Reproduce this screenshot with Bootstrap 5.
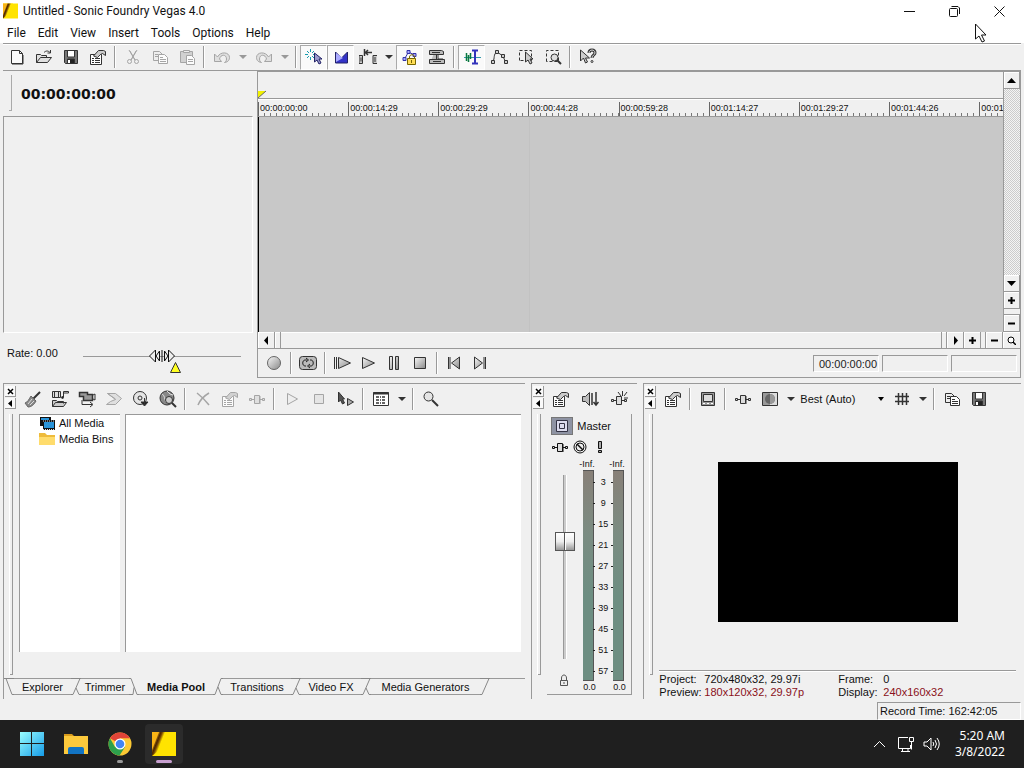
<!DOCTYPE html>
<html lang="en">
<head>
<meta charset="utf-8">
<meta name="viewport" content="width=device-width, initial-scale=1">
<title>Untitled - Sonic Foundry Vegas 4.0</title>
<link rel="stylesheet" href="https://cdn.jsdelivr.net/npm/bootstrap@5.3.0/dist/css/bootstrap.min.css">
<style>
:root{--face:#f0f0f0;--edge:#999;--ink:#333}
body{font-family:"Liberation Sans",Arial,sans-serif;font-size:11px;line-height:13px;color:#111;background:var(--face)}
svg{display:block;flex:none}
button,select,input{font:inherit;color:inherit}
.ico{width:18px;height:18px;fill:none;stroke:currentColor;stroke-width:1}
.sys{font-family:"Noto Sans","Open Sans",sans-serif;font-size:12px;line-height:16px}
.titlebar,.menus{font-family:Roboto,"Noto Sans",sans-serif}
.titlebar{height:22px;background:#fff;padding-right:2px}
.titlebar svg:first-child{margin:0 5px 0 3px}
.winbtn{width:45px;height:22px;border:0;background:none;padding:0}
.menus{height:21px;background:#fff;padding-left:1px}
.menus button{border:0;background:none;padding:0 6px}
.bar{border-top:1px solid var(--edge);border-bottom:1px solid var(--edge);height:28px;box-shadow:inset 0 1px #fff;margin:0 3px}
.tool,.drop{border:1px solid transparent;background:none;padding:0;width:27px;height:25px;display:flex;align-items:center;justify-content:center;color:var(--ink);flex:none}
.tool.on{background:#fafafa;border-color:#aaa #fff #fff #aaa}
.tool:disabled,.drop:disabled{color:#999}
.tool:disabled .ico{opacity:.85}
.drop{width:15px}
.drop::after{content:"";border:4px solid transparent;border-top-color:currentColor;border-bottom:0}
.split{width:8px;height:22px;flex:none;display:flex;justify-content:center}
.split::before{content:"";border-left:1px solid #999;border-right:1px solid #fff}
.side{width:254px;margin-left:3px}
.clockbar{height:45px;padding-top:4px}
.grip-v{width:3px;height:36px;margin-left:6px;border:solid #aaa;border-width:0 1px 1px 0}
.clock{font:bold 14px/38px "DejaVu Sans",sans-serif;margin-left:9px}
.sunk{border:1px solid;border-color:#999 #fff #fff #999}
.rate{height:45px;padding:14px 0 0 4px}
.rate-slide{width:158px;height:28px;margin-left:25px}
.slim{appearance:none;-webkit-appearance:none;background:linear-gradient(#999,#999) center/100% 1px no-repeat;width:100%;height:18px;margin:0;display:block}
.slim::-webkit-slider-thumb{-webkit-appearance:none;width:26px;height:16px;background:url("data:image/svg+xml,%3Csvg xmlns='http://www.w3.org/2000/svg' width='26' height='16' fill='%23eee' stroke='%23111'%3E%3Cpath d='M6.500 2v12L.5 8zM10.500 3v10L7 8zM19.500 2v12l6-6zM15.500 3v10l3.500-5zM13 2v12'/%3E%3C/svg%3E") no-repeat}
.rate-mark{left:86px;top:14px}
.timeline{border:1px solid #999;margin-right:3px}
.markers{height:27px;padding-top:18px;border-bottom:1px solid #999}
.ruler{height:18px;font-size:9px;line-height:18px;border-bottom:1px solid #999;box-shadow:inset 0 1px #fff}
.mark-cell{flex:0 0 12.1%;overflow:hidden;height:17px;padding-left:2px;white-space:nowrap;background:linear-gradient(#666,#666) 0 100%/1px 14px no-repeat,repeating-linear-gradient(90deg,#777 0 1px,transparent 1px 6px) 0 100%/100% 3px no-repeat}
.mark-cell:last-child{flex:1 1 0;min-width:0}
.tracks{background:linear-gradient(#c2c2c2,#c2c2c2) 36.4% 0/1px 100% no-repeat #c8c8c8;border-left:1px solid #000;flex:1}
.vscroll{width:17px;border-left:1px solid #999}
.sb{width:17px;height:17px;border:solid #999;border-width:0 1px 1px 0;box-shadow:inset 1px 1px #fff;background:var(--face);padding:0;display:flex;align-items:center;justify-content:center;flex:none;color:#000}
.vscroll .sb{width:16px}
.sb svg{width:9px;height:9px;fill:#000}
.gap-b{height:6px;border-bottom:1px solid #999}
.gap-r{width:5px;border-right:1px solid #999}
.dither{background:conic-gradient(#ccc 25%,#f4f4f4 0 50%,#ccc 0 75%,#f4f4f4 0) 0 0/2px 2px;flex:1}
.hscroll{height:17px;border-bottom:1px solid #999}
.hscroll .sb{height:16px;border-bottom:0}
.hthumb{border-right:1px solid #999;box-shadow:inset 1px 1px #fff;padding-left:5px}
.hthumb::before,.hthumb::after{content:"";border-left:1px solid #999;height:16px}
.hthumb::after{margin-left:auto;margin-right:4px}
.transport{height:28px;padding-left:3px}
.transport .tool{width:26px}
.readout{width:66px;height:17px;line-height:16px;margin-right:3px;padding-left:5px;white-space:nowrap;color:#222}
.docks{display:grid;grid-template-columns:minmax(0,1fr) 106px 37.1%;padding:5px 3px 0;gap:6px}
.dock{border:solid #999;border-width:1px 0 0 1px;min-width:0;height:316px}
.handle{width:15px;padding:2px 0 24px 1px;flex:none}
.handle button{width:11px;height:11px;border:solid #999;border-width:0 1px 1px 0;background:#fafafa;padding:0;margin-bottom:1px;display:flex;align-items:center;justify-content:center}
.handle svg{width:7px;height:7px}
.handle i{flex:1;width:3px;border:solid #999;border-width:0 1px 1px 0;box-shadow:-1px 0 #fff;margin:4px 0 0 5px}
.dock-tools{height:30px}
.tree{width:101px;background:#fff;border:solid #999;border-width:1px 0 0 1px;margin-right:5px}
.tree a{color:#111;line-height:16px;text-decoration:none;padding-left:19px;gap:4px;white-space:nowrap}
.pool{background:#fff;border:solid #999;border-width:1px 0 0 1px;margin-right:4px}
.panes{height:238px}
.tabstrip{height:17px;margin-top:26px;margin-left:-15px}
.tabstrip button{border:solid #999;border-width:1px 0;background:none;padding:0;height:17px;line-height:16px;text-align:center;white-space:nowrap}
.tabstrip svg{width:10px;height:17px;stroke:#888;fill:none}
.tabstrip button.active{border-top-color:transparent;font-weight:bold}
.t48{width:48px}.t57{width:57px}.t60{width:60px}.t68{width:68px}.t74{width:74px}.t109{width:109px}
.tab-rest{border-top:1px solid #999}
.mix-tools,.mix-row{gap:2px}
.strip{border:solid #999;border-width:0 1px 1px 0;width:85px;height:281px;padding:3px 0 0 4px}
.mix-row{padding-top:3px}
.master-btn{width:22px;height:18px;border:1px solid #777;background:#8e93a3;padding:0}
.tiny{font-size:9px;line-height:11px}
.fader-col{width:28px;padding:17px 0 0 4px}
.fader{appearance:none;-webkit-appearance:none;writing-mode:vertical-lr;direction:rtl;width:20px;height:188px;margin:0;background:linear-gradient(90deg,#999 1px,#ccc 1px 3px,#fff 3px) center/4px 184px no-repeat}
.fader::-webkit-slider-thumb{-webkit-appearance:none;width:20px;height:19px;border:1px solid #555;background:linear-gradient(90deg,transparent 8px,#555 8px 9px,#fff 9px 10px,transparent 10px),linear-gradient(#fff,#eee 50%,#999)}
.meter-col{width:18px;padding-top:3px}
.meter{width:11px;height:211px;border:solid #555;border-width:1px 1px 1px 0;background:linear-gradient(#888078,#7b8c82 30%,#6d8e82 60%,#6d8e82);margin-bottom:1px}
.scale{width:12px;padding-top:16px;line-height:21px;text-align:center;font-size:9px}
.scale div{height:21px;position:relative}
.scale div::before,.scale div::after{content:"";position:absolute;top:10px;left:-4px;width:2px;height:11px;border:solid #222;border-width:1px 0 0}
.scale div::after{left:auto;right:-4px}
.viewer{width:240px;height:160px;background:#000}
.info{border-top:1px solid #999;box-shadow:inset 0 1px #fff;margin:0 5px 0 0;padding-top:2px;grid-template-columns:45px 134px 45px 1fr;display:grid;height:29px}
.info dt{font-weight:normal}.info dd{margin:0;white-space:nowrap}
.red{color:#8a1020}
.quality{appearance:none;-webkit-appearance:none;border:0;border-radius:0;width:90px;height:20px;padding:0 12px 0 2px;background:url("data:image/svg+xml,%3Csvg xmlns='http://www.w3.org/2000/svg' width='6' height='4'%3E%3Cpath d='M0 0h6L3 4z'/%3E%3C/svg%3E") no-repeat right 4px center;margin:0}
.statusline{padding-top:3px}
.record{width:144px;height:18px;line-height:16px;padding-left:2px;margin-right:3px;white-space:nowrap}
.taskbar{height:48px;background:#1f1f1f;color:#fff;padding-left:13px}
.task{width:38px;height:40px;border:0;border-radius:4px;background:none;padding:0;margin-right:6px;position:relative;display:flex;align-items:center;justify-content:center}
.task.on{background:#2b2b2b}
.task.run::after{content:"";position:absolute;bottom:1px;width:6px;height:3px;border-radius:2px;background:#999}
.task.on::after{width:16px;background:#c8a0d0}
.tray-clock{margin:0 19px 0 15px}
.pointer{left:974px;top:23px;z-index:5;pointer-events:none}
</style>
</head>
<body>
<svg width="0" height="0" class="position-absolute" aria-hidden="true">
<defs>
<linearGradient id="gm" x2="1" y2="1"><stop stop-color="#f8f8f8"/><stop offset="1" stop-color="#888"/></linearGradient>
<linearGradient id="streak" x1=".2" y1=".2" x2=".7" y2=".5"><stop stop-color="#f9b416"/><stop offset=".35" stop-color="#4a2500"/><stop offset=".5" stop-color="#7a4a00"/><stop offset=".75" stop-color="#ffe300"/></linearGradient>
<linearGradient id="bl" x2="1" y2="1"><stop stop-color="#9ff"/><stop offset="1" stop-color="#159be8"/></linearGradient>
<symbol id="new" viewBox="0 0 18 18"><path d="M3.500 2.500h8l3 3v10h-11z" fill="#fafafa"/><path d="M11.500 2.500v3h3M15 7v9H4"/></symbol>
<symbol id="open" viewBox="0 0 18 18"><path d="M1.500 14.500v-8h4l1 1h5v2M1.500 14.500l4-5h11l-4 5z" fill="#e0e0e0"/><path d="M9 4.500c2-2 4-2 6 0M15.500 2v3h-3"/></symbol>
<symbol id="save" viewBox="0 0 18 18"><path d="M2.500 2.500h13v13h-12l-1-1z" fill="#777"/><path d="M5.500 3v6h7V3" fill="#fff"/><path d="M5.500 15v-4h7v4" fill="#222"/><path d="M7 12v3" stroke="#fff" stroke-width="2"/></symbol>
<symbol id="prop" viewBox="0 0 18 18"><path d="M1.500 6.500h11v10h-11z" fill="#fff"/><path d="M3 10.500h2m1 0h5M3 12.500h2m1 0h5M3 14.500h2m1 0h5"/><path d="M4.500 8l5-5.500h5l2 1v4l-3-2-2 1-3 3z" fill="#ccc"/></symbol>
<symbol id="cut" viewBox="0 0 18 18"><path d="M5 2l6 10M13 2L7 12M6 3l5 9M12 3l-5 9"/><circle cx="5.500" cy="13.500" r="2"/><circle cx="12.500" cy="13.500" r="2"/></symbol>
<symbol id="copy" viewBox="0 0 18 18"><path d="M2.500 3.500h6l3 3v6h-9z" fill="#eee"/><path d="M7.500 6.500h6l3 3v6h-9z" fill="#fff"/><path d="M4 6.500h3M4 8.500h3M9 9.500h3m-3 2h6m-6 2h6"/></symbol>
<symbol id="paste" viewBox="0 0 18 18"><path d="M2.500 3.500h12v11h-12z" fill="#ccc"/><path d="M5.500 4.500v-2h6v2z" fill="#eee"/><path d="M8.500 7.500h5l3 3v6h-8z" fill="#fff"/><path d="M10 11.500h5m-5 2h5"/></symbol>
<symbol id="undo" viewBox="0 0 18 18"><path d="M1.500 6v7.500h7l-2-2.500c1-5 7-5 7 0 0 2-1 3-2 3.500 4-.5 5-3 5-5 0-5.500-9-6.500-12-.5z" fill="#ddd"/></symbol>
<symbol id="redo" viewBox="0 0 18 18"><path d="M16.500 6v7.500h-7l2-2.500c-1-5-7-5-7 0 0 2 1 3 2 3.500-4-.5-5-3-5-5 0-5.500 9-6.500 12-.5z" fill="#ddd"/></symbol>
<symbol id="snap" viewBox="0 0 18 18"><path d="M5.500 1v3m0 5v3M0 6.500h3m5 0h3M2 3l2 2m3 3l2 2M2 10l2-2m3-3l2-2" stroke="#189cae"/><path d="M9.500 5v9l2.500-2 2 4 2-1-2-4h3z" fill="#99c" stroke="#226"/></symbol>
<symbol id="fade" viewBox="0 0 18 18"><path d="M3.500 4v11h12V4l-6 6z" fill="#3434c8" stroke="#226"/><path d="M4 5v9l7-4z" fill="#aaf" stroke="none"/></symbol>
<symbol id="ripple" viewBox="0 0 18 18"><path d="M0 7.500h3.500v8H0zm2 2v4M18 7.500h-4v8h4M16 9v5" fill="#ccc"/><path d="M5.500 1v7M5 4.500h8M9 2L6.500 4.500 9 7" stroke-width="1.500"/></symbol>
<symbol id="lockenv" viewBox="0 0 18 18"><path d="M3.500 11l4-7 6 3" stroke="#33a"/><path d="M2 9.500h3v3H2zM6 2.500h3v3H6zM12 5.500h3v3h-3z" fill="#aaf" stroke="#33a"/><path d="M8.500 10V9c0-3 5-3 5 0v2" stroke="#760"/><path d="M6.500 10.500h8v6h-8z" fill="#fd5" stroke="#760"/><path d="M10.500 12v3" stroke="#760"/></symbol>
<symbol id="group" viewBox="0 0 18 18"><path d="M1.500 2.500h12l2 1v3h-14zM1.500 11.500h15v4h-15zM5.500 6.500h3v5h-5" fill="#bbb"/><path d="M10 7v4h5M4 4.500h8M5 13.500h8"/></symbol>
<symbol id="edit" viewBox="0 0 18 18"><path d="M1 9.500h17" stroke="#39a"/><path d="M3.500 5v8m2-6v7m2-9v6" stroke="#087840" stroke-width="1.500"/><path d="M9 2.500h6M9 15.500h6M12 3v12" stroke="#33b" stroke-width="2"/></symbol>
<symbol id="env" viewBox="0 0 18 18"><path d="M3 13C5 11 3 6 7 4l6 4 2 5"/><path d="M1.500 12.500h3v3h-3zM5.500 2.500h3v3h-3zM11.500 6.500h3v3h-3zM14.500 12.500h3v3h-3z" fill="#ccc"/></symbol>
<symbol id="sel" viewBox="0 0 18 18"><path d="M2.500 12.500v-10h12v10z" stroke-dasharray="3 2"/><path d="M8.500 4v10l2.500-2 2 4 2-1-2-4h3z" fill="#ccc"/></symbol>
<symbol id="zoomt" viewBox="0 0 18 18"><path d="M2.500 13.500v-11h12v11z" stroke-dasharray="3 2"/><circle cx="10.500" cy="9.500" r="3.500" fill="#ddd"/><path d="M13 12l4 4" stroke-width="2"/></symbol>
<symbol id="help" viewBox="0 0 18 18"><path d="M1.500 2v11l3-3 2 5 2-1-2-4h4z" fill="#ccc"/><path d="M10 5c0-4 6-4 6 0 0 2-3 2-3 5" stroke-width="3"/><path d="M10 5c0-4 6-4 6 0 0 2-3 2-3 5" stroke="#ddd"/><circle cx="13" cy="13.500" r="1"/></symbol>
<symbol id="play" viewBox="0 0 18 18"><path d="M3.500 3.500v11l12-5.500z" fill="url(#gm)"/></symbol>
<symbol id="playd" viewBox="0 0 18 18"><path d="M4.500 3.500v11l10-5.500z" fill="#eee"/></symbol>
<symbol id="stopd" viewBox="0 0 18 18"><path d="M4.500 4.500h9v9h-9z" fill="#e4e4e4"/></symbol>
<symbol id="playall" viewBox="0 0 18 18"><path d="M1.500 3v12M3.500 3v12M5.500 3.500v11l12-5.500z" fill="url(#gm)"/></symbol>
<symbol id="stop" viewBox="0 0 18 18"><path d="M3.500 3.500h11v11h-11z" fill="url(#gm)"/></symbol>
<symbol id="pause" viewBox="0 0 18 18"><path d="M4.500 2.500h3v13h-3zM10.500 2.500h3v13h-3z" fill="url(#gm)"/></symbol>
<symbol id="rec" viewBox="0 0 18 18"><circle cx="9" cy="9" r="6.500" fill="url(#gm)" stroke="#666"/></symbol>
<symbol id="loop" viewBox="0 0 18 18"><rect x=".5" y="2.500" width="17" height="13" rx="3" fill="#bbb"/><path d="M8 6H6c-3 0-3 6 0 6h1M10 12h2c3 0 3-6 0-6h-1M7 4l2.500 2L7 8M11 10l-2.500 2 2.500 2" stroke="#222"/></symbol>
<symbol id="first" viewBox="0 0 18 18"><path d="M3.500 3v12M5 3v12M14.500 3v12l-8-6z" fill="url(#gm)"/></symbol>
<symbol id="last" viewBox="0 0 18 18"><path d="M14.500 3v12M13 3v12M3.500 3v12l8-6z" fill="url(#gm)"/></symbol>
<symbol id="brush" viewBox="0 0 18 18"><path d="M16 2L9 9" stroke-width="2"/><path d="M7 6l5 5c-2 4-5 6-8 6l-3-4c3-1 4-4 6-7z" fill="#888" stroke="#666"/><path d="M4 14l4-5M6 15l4-4" stroke="#ddd"/></symbol>
<symbol id="import" viewBox="0 0 18 18"><path d="M1.500 1.500h8v6h-8z" fill="#ddd"/><path d="M3.500 2v5M7.500 2v5M12.500 7V1.500h5V3h-5"/><circle cx="11.500" cy="7.500" r="1" fill="#222"/><path d="M1.500 16.500v-6h4l1 1h6v2M1.500 16.500l3-4h11l-3 4z" fill="#ccc"/></symbol>
<symbol id="cam" viewBox="0 0 18 18"><path d="M1.500 2.500h8v2h5v6h-9v-4h-4z" fill="#999" stroke-width="1.500"/><path d="M15 5l2-1v6l-2-1M4 10v4.500h10M12 12l3 2.500-3 2.500"/></symbol>
<symbol id="scan" viewBox="0 0 18 18"><path d="M2.500 3.500h8l6 5-6 6h-9l4-3 5-2zM2.500 3.500l8 5.500" fill="#ddd"/></symbol>
<symbol id="cd" viewBox="0 0 18 18"><circle cx="8" cy="8" r="6.500" fill="#e4e4e4"/><circle cx="8" cy="8" r="2"/><path d="M12.500 8v7M9 12l3.500 4 3.500-4z" fill="#222"/></symbol>
<symbol id="web" viewBox="0 0 18 18"><circle cx="8" cy="8" r="7" fill="#888"/><path d="M3 4c3 1 2 5 4 8M8 1l3 3 3 1" stroke="#ddd"/><circle cx="10" cy="10" r="3.500" fill="#ccc"/><path d="M13 13l4 4" stroke-width="2"/></symbol>
<symbol id="del" viewBox="0 0 18 18"><path d="M3 3c4 3 8 7 12 12M15 3C10 6 6 10 4 15" stroke-width="1.500"/></symbol>
<symbol id="fx" viewBox="0 0 18 18"><path d="M3 9.500h12"/><path d="M1.500 8.500h2v2h-2zM14.500 8.500h2v2h-2zM6.500 5.500h5v8h-5z" fill="#ddd"/><path d="M12 6v8"/></symbol>
<symbol id="fxa" viewBox="0 0 18 18"><path d="M3 10.500h12M12.500 1v5M8 2l3 4M17 2l-3 4M14 8h4"/><path d="M1.500 9.500h2v2h-2zM14.500 9.500h2v2h-2zM6.500 6.500h5v8h-5z" fill="#ddd"/></symbol>
<symbol id="auto" viewBox="0 0 18 18"><path d="M1.500 2v10l2-2 2 4 2-1-2-4h2z" fill="#555"/><path d="M10.500 8.500v7l6-3.500z" fill="#aaa"/></symbol>
<symbol id="view" viewBox="0 0 18 18"><path d="M1.500 2.500h15v13h-15z" fill="#fff"/><path d="M1 3.500h16" stroke-width="2"/><path d="M4 7h10M4 10h10M4 13h10" stroke-width="1.500" stroke-dasharray="3 1 1 1"/></symbol>
<symbol id="mag" viewBox="0 0 18 18"><circle cx="6.500" cy="6.500" r="4.500" fill="#e4e4e4"/><path d="M10 10l6 6" stroke-width="2"/></symbol>
<symbol id="spk" viewBox="0 0 18 18"><path d="M1.500 6.500h3l4-4v13l-4-4h-3z" fill="#bbb"/><path d="M11 3v12M15 2v12M12.500 12l2.500 3 2.500-3" stroke-width="1.500"/></symbol>
<symbol id="mute" viewBox="0 0 18 18"><circle cx="9" cy="9" r="6" fill="#eee"/><circle cx="9" cy="9" r="4"/><path d="M6 6l6 6" stroke-width="1.500"/></symbol>
<symbol id="bang" viewBox="0 0 18 18"><path d="M7.500 3.500h3v7h-3zM7.500 12.500h3v2h-3z" fill="#aaa"/></symbol>
<symbol id="lock" viewBox="0 0 18 18"><path d="M6.500 8V6c0-4 5-4 5 0v2M5.500 8.500h7v5h-7z" fill="#eee" stroke="#555"/><path d="M9 10v2" stroke="#555"/></symbol>
<symbol id="mon" viewBox="0 0 18 18"><path d="M2.500 2.500h13v13h-13z" fill="#999"/><path d="M4.500 4.500h9v7h-9z" fill="#ddd"/><path d="M4 13.500h10" stroke="#fff" stroke-dasharray="2 2"/></symbol>
<symbol id="half" viewBox="0 0 18 18"><path d="M1.500 2.500h15v13h-15z" fill="#ddd"/><path d="M2 3h7v12H2z" fill="#999" stroke="none"/><circle cx="9" cy="9" r="5" fill="#666" stroke="none"/><path d="M9 4a5 5 0 010 10z" fill="#999" stroke="none"/></symbol>
<symbol id="gridi" viewBox="0 0 18 18"><path d="M5.500 3v12M9.500 3v12M13.500 3v12M2 6.500h14M2 11.500h14" stroke-width="1.500"/></symbol>
<symbol id="plus" viewBox="0 0 9 9"><path d="M1 4.500h7M4.500 1v7" stroke="#000" stroke-width="2"/></symbol>
<symbol id="minus" viewBox="0 0 9 9"><path d="M1 4.500h7" stroke="#000" stroke-width="2"/></symbol>
<symbol id="x" viewBox="0 0 7 7"><path d="M1 1l5 5M6 1L1 6" stroke="#000" stroke-width="1.500"/></symbol>
<symbol id="lt" viewBox="0 0 7 7"><path d="M5 0v7L1 3.500z" fill="#000"/></symbol>
<symbol id="vegas" viewBox="0 0 24 24"><path d="M0 0h24v24H0z" fill="#ffe300"/><path d="M0 0h8L0 20z" fill="#f9b416"/><path d="M7 0h9L5 20l-5 4v-6z" fill="url(#streak)"/></symbol>
</defs>
</svg>

<div class="d-flex flex-column min-vh-100 position-relative">
<header>
  <div class="titlebar d-flex align-items-center sys">
    <svg width="15" height="16"><use href="#vegas"/></svg>
    <span>Untitled - Sonic Foundry Vegas 4.0</span>
    <div class="ms-auto d-flex">
      <button class="winbtn" aria-label="Minimize"><svg class="mx-auto" width="11" height="11"><path d="M0 5.500h11" stroke="#111"/></svg></button>
      <button class="winbtn" aria-label="Restore"><svg class="mx-auto" width="11" height="11" fill="none" stroke="#111"><rect x=".5" y="2.500" width="8" height="8" rx="1"/><path d="M2.500.5H9l1.500 1.500v6"/></svg></button>
      <button class="winbtn" aria-label="Close"><svg class="mx-auto" width="11" height="11" stroke="#111"><path d="M.5.500l10 10M10.500.5l-10 10"/></svg></button>
    </div>
  </div>
  <nav class="menus d-flex align-items-center sys" aria-label="Menu">
    <button>File</button><button>Edit</button><button>View</button><button>Insert</button><button>Tools</button><button>Options</button><button>Help</button>
  </nav>
  <div class="bar d-flex align-items-center" role="toolbar" aria-label="Main">
    <button class="tool" aria-label="New"><svg class="ico"><use href="#new"/></svg></button>
    <button class="tool" aria-label="Open"><svg class="ico"><use href="#open"/></svg></button>
    <button class="tool" aria-label="Save"><svg class="ico"><use href="#save"/></svg></button>
    <button class="tool" aria-label="Properties"><svg class="ico"><use href="#prop"/></svg></button>
    <span class="split"></span>
    <button class="tool" disabled aria-label="Cut"><svg class="ico"><use href="#cut"/></svg></button>
    <button class="tool" disabled aria-label="Copy"><svg class="ico"><use href="#copy"/></svg></button>
    <button class="tool" disabled aria-label="Paste"><svg class="ico"><use href="#paste"/></svg></button>
    <span class="split"></span>
    <button class="tool" disabled aria-label="Undo"><svg class="ico"><use href="#undo"/></svg></button>
    <button class="drop" disabled aria-label="Undo list"></button>
    <button class="tool" disabled aria-label="Redo"><svg class="ico"><use href="#redo"/></svg></button>
    <button class="drop" disabled aria-label="Redo list"></button>
    <span class="split"></span>
    <button class="tool on" aria-label="Snapping"><svg class="ico"><use href="#snap"/></svg></button>
    <button class="tool on" aria-label="Automatic crossfades"><svg class="ico"><use href="#fade"/></svg></button>
    <button class="tool" aria-label="Ripple"><svg class="ico"><use href="#ripple"/></svg></button>
    <button class="drop" aria-label="Ripple options"></button>
    <button class="tool on" aria-label="Lock envelopes"><svg class="ico"><use href="#lockenv"/></svg></button>
    <button class="tool" aria-label="Ignore grouping"><svg class="ico"><use href="#group"/></svg></button>
    <span class="split"></span>
    <button class="tool on" aria-label="Normal edit"><svg class="ico"><use href="#edit"/></svg></button>
    <button class="tool" aria-label="Envelope edit"><svg class="ico"><use href="#env"/></svg></button>
    <button class="tool" aria-label="Selection edit"><svg class="ico"><use href="#sel"/></svg></button>
    <button class="tool" aria-label="Zoom edit"><svg class="ico"><use href="#zoomt"/></svg></button>
    <span class="split"></span>
    <button class="tool" aria-label="What's this"><svg class="ico"><use href="#help"/></svg></button>
  </div>
</header>

<main class="d-flex flex-column flex-grow-1">
  <section class="d-flex flex-grow-1">
    <div class="side d-flex flex-column">
      <div class="clockbar d-flex"><span class="grip-v"></span><span class="clock">00:00:00:00</span></div>
      <div class="sunk flex-grow-1 me-1"></div>
      <div class="rate d-flex">
        <label for="rate">Rate: 0.00</label>
        <div class="rate-slide position-relative">
          <input id="rate" type="range" class="slim" min="-20" max="20" value="0">
          <svg class="position-absolute rate-mark" width="13" height="13"><path d="M6.500 1.500l5 10h-10z" fill="#ff2" stroke="#333"/></svg>
        </div>
      </div>
    </div>
    <div class="timeline d-flex flex-column flex-grow-1">
      <div class="d-flex flex-grow-1">
        <div class="d-flex flex-column flex-grow-1 overflow-hidden">
          <div class="markers"><svg width="9" height="8"><path d="M0 1h8L0 8z" fill="#f2f200"/><path d="M8 1L0 8" stroke="#666"/></svg></div>
          <div class="ruler d-flex overflow-hidden">
            <span class="mark-cell">00:00:00:00</span><span class="mark-cell">00:00:14:29</span><span class="mark-cell">00:00:29:29</span><span class="mark-cell">00:00:44:28</span><span class="mark-cell">00:00:59:28</span><span class="mark-cell">00:01:14:27</span><span class="mark-cell">00:01:29:27</span><span class="mark-cell">00:01:44:26</span><span class="mark-cell">00:01</span>
          </div>
          <div class="tracks"></div>
        </div>
        <div class="vscroll d-flex flex-column">
          <button class="sb" aria-label="Scroll up"><svg viewBox="0 0 9 9"><path d="M0 7h9L4.500 2z"/></svg></button>
          <div class="dither"></div>
          <button class="sb" aria-label="Scroll down"><svg viewBox="0 0 9 9"><path d="M0 2h9L4.500 7z"/></svg></button>
          <button class="sb" aria-label="Taller tracks"><svg><use href="#plus"/></svg></button>
          <div class="gap-b"></div>
          <button class="sb" aria-label="Shorter tracks"><svg><use href="#minus"/></svg></button>
        </div>
      </div>
      <div class="hscroll d-flex">
        <button class="sb" aria-label="Scroll left"><svg viewBox="0 0 9 9"><path d="M6 0v9L2 4.500z"/></svg></button>
        <div class="hthumb flex-grow-1 d-flex"></div>
        <button class="sb" aria-label="Scroll right"><svg viewBox="0 0 9 9"><path d="M3 0v9l4-4.500z"/></svg></button>
        <button class="sb" aria-label="Zoom in"><svg><use href="#plus"/></svg></button>
        <span class="gap-r"></span>
        <button class="sb" aria-label="Zoom out"><svg><use href="#minus"/></svg></button>
        <button class="sb border-end-0" aria-label="Zoom"><svg viewBox="0 0 9 9"><circle cx="4" cy="4" r="3" fill="#fff" stroke="#000"/><path d="M6 6l3 3" stroke="#000" stroke-width="1.500"/></svg></button>
      </div>
      <div class="transport d-flex align-items-center">
        <button class="tool" aria-label="Record"><svg class="ico"><use href="#rec"/></svg></button><span class="split"></span>
        <button class="tool" aria-label="Loop"><svg class="ico"><use href="#loop"/></svg></button><span class="split"></span>
        <button class="tool" aria-label="Play from start"><svg class="ico"><use href="#playall"/></svg></button>
        <button class="tool" aria-label="Play"><svg class="ico"><use href="#play"/></svg></button>
        <button class="tool" aria-label="Pause"><svg class="ico"><use href="#pause"/></svg></button>
        <button class="tool" aria-label="Stop"><svg class="ico"><use href="#stop"/></svg></button><span class="split"></span>
        <button class="tool" aria-label="Go to start"><svg class="ico"><use href="#first"/></svg></button>
        <button class="tool" aria-label="Go to end"><svg class="ico"><use href="#last"/></svg></button>
        <div class="d-flex ms-auto"><span class="sunk readout">00:00:00:00</span><span class="sunk readout"></span><span class="sunk readout"></span></div>
      </div>
    </div>
  </section>

  <section class="docks">
    <div class="dock d-flex">
      <div class="handle d-flex flex-column"><button aria-label="Close"><svg><use href="#x"/></svg></button><button aria-label="Collapse"><svg><use href="#lt"/></svg></button><i></i></div>
      <div class="flex-grow-1 d-flex flex-column">
        <div class="dock-tools d-flex align-items-center">
          <button class="tool" aria-label="Clean up"><svg class="ico"><use href="#brush"/></svg></button>
          <button class="tool" aria-label="Import media"><svg class="ico"><use href="#import"/></svg></button>
          <button class="tool" aria-label="Capture video"><svg class="ico"><use href="#cam"/></svg></button>
          <button class="tool" disabled aria-label="Get photo"><svg class="ico"><use href="#scan"/></svg></button>
          <button class="tool" aria-label="Extract audio"><svg class="ico"><use href="#cd"/></svg></button>
          <button class="tool" aria-label="Get media from web"><svg class="ico"><use href="#web"/></svg></button><span class="split"></span>
          <button class="tool" disabled aria-label="Remove"><svg class="ico"><use href="#del"/></svg></button>
          <button class="tool" disabled aria-label="Media properties"><svg class="ico"><use href="#prop"/></svg></button>
          <button class="tool" disabled aria-label="Media FX"><svg class="ico"><use href="#fx"/></svg></button><span class="split"></span>
          <button class="tool" disabled aria-label="Play media"><svg class="ico"><use href="#playd"/></svg></button>
          <button class="tool" disabled aria-label="Stop media"><svg class="ico"><use href="#stopd"/></svg></button>
          <button class="tool" aria-label="Auto preview"><svg class="ico"><use href="#auto"/></svg></button><span class="split"></span>
          <button class="tool" aria-label="Views"><svg class="ico"><use href="#view"/></svg></button><button class="drop" aria-label="View list"></button><span class="split"></span>
          <button class="tool" aria-label="Search"><svg class="ico"><use href="#mag"/></svg></button>
        </div>
        <div class="panes d-flex">
          <nav class="tree">
            <a href="#" class="d-flex align-items-center"><svg width="16" height="15"><path d="M1 1h11v9H1z" fill="#111"/><path d="M4 4h12v10H4z" fill="#111"/><path d="M5 6h10v6H5z" fill="#2a94d8"/><path d="M2 2h8v2H2z" fill="#2a94d8"/><path d="M4 5h12M4 13.500h12" stroke="#ddd" stroke-dasharray="1 1"/></svg>All Media</a>
            <a href="#" class="d-flex align-items-center"><svg width="16" height="14"><path d="M0 1h6l2 2h8v10H0z" fill="#eebb3c"/><path d="M0 5h16v8H0z" fill="#ffdc6c"/></svg>Media Bins</a>
          </nav>
          <div class="pool flex-grow-1"></div>
        </div>
        <div class="tabstrip d-flex" role="tablist">
          <svg><path d="M0 .5h10M2 .5l6 16h2"/></svg><button role="tab" class="t57">Explorer</button>
          <svg><path d="M0 .5h10M0 16.500h2l7-16M5 10l3 6.500h2"/></svg><button role="tab" class="t48">Trimmer</button>
          <svg><path d="M0 .5h2l6 16h2M0 16.500h4l1-7"/></svg><button role="tab" class="active t74" aria-selected="true">Media Pool</button>
          <svg><path d="M10 .5H8l-6 16H0M5 9l3 7.500h2"/></svg><button role="tab" class="t68">Transitions</button>
          <svg><path d="M0 .5h10M0 16.500h2l7-16M5 10l3 6.500h2"/></svg><button role="tab" class="t60">Video FX</button>
          <svg><path d="M0 .5h10M0 16.500h2l7-16M5 10l3 6.500h2"/></svg><button role="tab" class="t109">Media Generators</button>
          <svg><path d="M0 .5h10M0 16.500h2l7-16"/></svg><span class="tab-rest flex-grow-1"></span>
        </div>
      </div>
    </div>

    <div class="dock d-flex">
      <div class="handle d-flex flex-column"><button aria-label="Close"><svg><use href="#x"/></svg></button><button aria-label="Collapse"><svg><use href="#lt"/></svg></button><i></i></div>
      <div>
        <div class="dock-tools mix-tools d-flex align-items-center">
          <button class="tool" aria-label="Mixer properties"><svg class="ico"><use href="#prop"/></svg></button>
          <button class="tool" aria-label="Downmix"><svg class="ico"><use href="#spk"/></svg></button>
          <button class="tool" aria-label="Insert FX"><svg class="ico"><use href="#fxa"/></svg></button>
        </div>
        <div class="strip">
          <div class="d-flex align-items-center"><button class="master-btn" aria-label="Master bus"><svg class="mx-auto" width="12" height="12" fill="#dde" stroke="#334"><path d="M.5.500h11v11H.5zM3.500 3.500h5v5h-5z"/></svg></button><span class="ms-1">Master</span></div>
          <div class="mix-row d-flex"><svg class="ico"><use href="#fx"/></svg><svg class="ico"><use href="#mute"/></svg><svg class="ico"><use href="#bang"/></svg></div>
          <div class="d-flex">
            <div class="fader-col"><input type="range" class="fader" min="0" max="100" value="65" aria-label="Master volume"><svg class="ico mt-2"><use href="#lock"/></svg></div>
            <div class="meter-col tiny"><div>-Inf.</div><div class="meter mx-1"></div><div class="ps-1">0.0</div></div>
            <div class="scale"><div>3</div><div>9</div><div>15</div><div>21</div><div>27</div><div>33</div><div>39</div><div>45</div><div>51</div><div>57</div></div>
            <div class="meter-col tiny"><div>-Inf.</div><div class="meter mx-1"></div><div class="ps-1">0.0</div></div>
          </div>
        </div>
      </div>
    </div>

    <div class="dock d-flex">
      <div class="handle d-flex flex-column"><button aria-label="Close"><svg><use href="#x"/></svg></button><button aria-label="Collapse"><svg><use href="#lt"/></svg></button><i></i></div>
      <div class="flex-grow-1 d-flex flex-column">
        <div class="dock-tools d-flex align-items-center">
          <button class="tool" aria-label="Project video properties"><svg class="ico"><use href="#prop"/></svg></button><span class="split"></span>
          <button class="tool" aria-label="External monitor"><svg class="ico"><use href="#mon"/></svg></button><span class="split"></span>
          <button class="tool" aria-label="Video output FX"><svg class="ico"><use href="#fx"/></svg></button>
          <button class="tool" aria-label="Split screen"><svg class="ico"><use href="#half"/></svg></button><button class="drop" aria-label="Split options"></button>
          <select class="quality" aria-label="Preview quality"><option>Best (Auto)</option></select>
          <button class="tool" aria-label="Overlays"><svg class="ico"><use href="#gridi"/></svg></button><button class="drop" aria-label="Overlay options"></button><span class="split"></span>
          <button class="tool" aria-label="Copy snapshot"><svg class="ico"><use href="#copy"/></svg></button>
          <button class="tool" aria-label="Save snapshot"><svg class="ico"><use href="#save"/></svg></button>
        </div>
        <div class="flex-grow-1 d-flex align-items-center justify-content-center me-1"><div class="viewer"></div></div>
        <dl class="info"><dt>Project:</dt><dd>720x480x32, 29.97i</dd><dt>Frame:</dt><dd>0</dd><dt>Preview:</dt><dd class="red">180x120x32, 29.97p</dd><dt>Display:</dt><dd class="red">240x160x32</dd></dl>
      </div>
    </div>
  </section>
  <div class="statusline d-flex justify-content-end"><span class="sunk record">Record Time: 162:42:05</span></div>
</main>

<footer class="taskbar d-flex align-items-center sys">
  <button class="task" aria-label="Start"><svg width="24" height="24" fill="url(#bl)"><path d="M0 0h11v11H0zM12 0h12v11H12zM0 12h11v12H0zM12 12h12v12H12z"/></svg></button>
  <button class="task" aria-label="File Explorer"><svg width="26" height="24"><path d="M1 2h8l3 3h-11z" fill="#d89b1c"/><path d="M1 4h24v18H1z" fill="#fcc93c"/><path d="M5 22v-5q0-2 2-2h12q2 0 2 2v5z" fill="#1274c4"/></svg></button>
  <button class="task run" aria-label="Chrome"><svg width="24" height="24" viewBox="0 0 24 24"><circle cx="12" cy="12" r="11.500" fill="#fcc934"/><path d="M12 12L2 6.300A11.500 11.500 0 0122 6.300H12z" fill="#e04438"/><path d="M12 12l5 3-5.500 8.500A11.500 11.500 0 012 6.300L7 15z" fill="#2da04c"/><circle cx="12" cy="12" r="5.500" fill="#fff"/><circle cx="12" cy="12" r="4.300" fill="#4285f4"/></svg></button>
  <button class="task run on" aria-label="Vegas"><svg width="24" height="24"><use href="#vegas"/></svg></button>
  <div class="ms-auto d-flex align-items-center">
    <svg width="13" height="8" fill="none" stroke="#fff"><path d="M1 7l5.500-5.500L12 7"/></svg>
    <svg class="ms-2 me-2 ps-1" width="21" height="17" viewBox="0 0 17 17" fill="none" stroke="#fff"><path d="M10 1.500H.5v11h12V9M3 15.500h9M4.500 13v2.500M10 13v2.500M11.500 1.500h4v4h-4zM13.500 5.500v8"/></svg>
    <svg width="17" height="16" fill="none" stroke="#fff"><path d="M1 6h3l4-4v12l-4-4H1zM10 6q1.500 2 0 4M12 4q3 4 0 8M14 2q4.500 6 0 12"/></svg>
    <div class="tray-clock text-end">5:20 AM<br>3/8/2022</div>
  </div>
</footer>
<svg class="pointer position-absolute" width="13" height="20"><path d="M1.500 1v15l3.500-3 3 6 2.500-1-3-6h4.500z" fill="#fff" stroke="#111"/></svg>
</div>
<script src="https://cdn.jsdelivr.net/npm/bootstrap@5.3.0/dist/js/bootstrap.bundle.min.js"></script>
</body>
</html>
